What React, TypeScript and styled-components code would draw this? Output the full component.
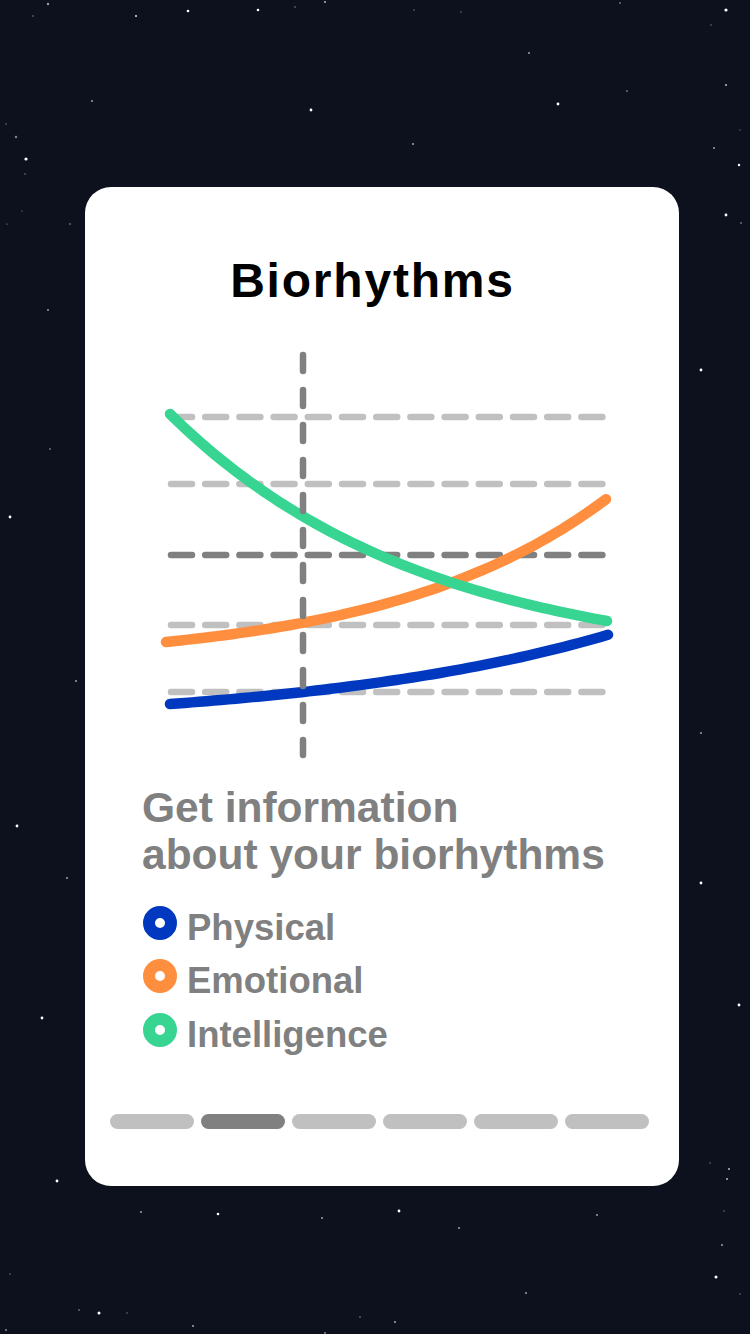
import React from "react";
import styled, { createGlobalStyle } from "styled-components";

const GlobalStyle = createGlobalStyle`
  html, body {
    margin: 0;
    padding: 0;
    background: #0c111d;
  }
  * { box-sizing: border-box; }
`;

const Page = styled.div`
  position: relative;
  width: 750px;
  min-height: 1334px;
  overflow: hidden;
  background: #0c111d;
  padding: 187px 0 0 85px;
  font-family: "Liberation Sans", Arial, sans-serif;
`;

const StarLayer = styled.svg`
  position: absolute;
  left: 0;
  top: 0;
  width: 750px;
  height: 1334px;
  pointer-events: none;
`;

const Card = styled.section`
  position: relative;
  z-index: 1;
  width: 594px;
  height: 999px;
  background: #ffffff;
  border-radius: 26px;
  padding: 66px 0 57px;
  display: flex;
  flex-direction: column;
`;

const Title = styled.h1`
  margin: 0;
  padding-right: 19px;
  text-align: center;
  font-size: 48px;
  line-height: 56px;
  font-weight: 700;
  letter-spacing: 1.8px;
  color: #000000;
`;

const Chart = styled.svg`
  display: block;
  margin: 36px 0 0 65px;
  width: 470px;
  height: 420px;
`;

const Subtitle = styled.p`
  margin: 19px 0 0 57px;
  font-size: 42.5px;
  line-height: 47px;
  font-weight: 700;
  color: #808080;
`;

const Legend = styled.ul`
  list-style: none;
  margin: 23.5px 0 0 58px;
  padding: 0;
  display: flex;
  flex-direction: column;
  gap: 1.5px;
`;

const LegendRow = styled.li`
  display: flex;
  align-items: flex-start;
  gap: 10px;
  height: 52px;
  font-size: 36.5px;
  line-height: 52px;
  font-weight: 700;
  color: #808080;
`;

const Dot = styled.span<{ $color: string }>`
  flex: none;
  width: 34px;
  height: 34px;
  margin-top: 4px;
  border-radius: 50%;
  border: 12px solid ${(p) => p.$color};
  background: #ffffff;
`;

const Pager = styled.div`
  margin: 53.5px 0 0 25px;
  display: flex;
  gap: 7px;
`;

const Pill = styled.span<{ $active?: boolean }>`
  width: 84px;
  height: 15px;
  border-radius: 8px;
  background: ${(p) => (p.$active ? "#808080" : "#c0c0c0")};
`;

const stars: [number, number, number, number][] = [
  [48, 4, 1.2, 0.6], [33, 16, 0.8, 0.5], [136, 16, 1, 0.9], [188, 11, 1.3, 1],
  [258, 10, 1.3, 1], [295, 7, 0.8, 0.5], [325, 2, 1, 0.7], [414, 10, 0.8, 0.4],
  [461, 12, 0.8, 0.4], [620, 3, 1, 0.4], [726, 10, 1.6, 1], [711, 25, 0.8, 0.4],
  [529, 53, 1, 0.6], [726, 85, 0.9, 0.8], [627, 91, 1, 0.4], [92, 101, 1, 0.6],
  [311, 110, 1.4, 1], [558, 104, 1.4, 1], [6, 124, 0.8, 0.4], [16, 137, 1.2, 0.5],
  [26, 159, 1.6, 1], [25, 174, 0.9, 0.3], [413, 144, 1.1, 0.6], [740, 130, 0.6, 0.6],
  [714, 148, 1, 0.6], [739, 165, 1.2, 1],
  [22, 211, 0.6, 0.6], [7, 224, 0.6, 0.6], [70, 224, 0.9, 0.4], [48, 310, 1, 0.6],
  [50, 449, 1, 0.4], [10, 517, 1.4, 1], [76, 681, 1, 0.6], [17, 826, 1.4, 1],
  [67, 878, 1, 0.6], [42, 1018, 1.4, 1], [57, 1181, 1.4, 1],
  [726, 215, 1.4, 1], [741, 223, 1, 0.4], [701, 370, 1.4, 1], [701, 733, 1, 0.6],
  [701, 883, 1.4, 1], [739, 1005, 1.4, 1], [710, 1163, 0.8, 0.4], [729, 1169, 1, 0.7],
  [727, 1179, 1, 0.7],
  [141, 1212, 1, 0.6], [218, 1214, 1.3, 1], [322, 1218, 1, 0.6], [399, 1211, 1.4, 1],
  [459, 1228, 1, 0.6], [597, 1215, 1, 0.6], [724, 1211, 0.8, 0.4], [722, 1245, 1, 0.6],
  [716, 1277, 1.5, 1], [526, 1293, 1, 0.6], [10, 1274, 0.8, 0.4], [79, 1310, 0.9, 0.4],
  [99, 1313, 1.5, 1], [127, 1313, 0.8, 0.4], [193, 1326, 1.1, 0.6], [395, 1322, 1.1, 0.6],
  [360, 1317, 1, 0.3], [740, 1294, 0.8, 0.4], [6, 1330, 1, 0.5], [325, 1333, 1, 0.5],
];

// chart origin in page coordinates
const OX = 150;
const OY = 345;

const curve = (x0: number, x1: number, f: (x: number) => number) => {
  const pts: string[] = [];
  const steps = 60;
  for (let i = 0; i <= steps; i++) {
    const x = x0 + ((x1 - x0) * i) / steps;
    pts.push(`${(x - OX).toFixed(2)},${(f(x) - OY).toFixed(2)}`);
  }
  return "M" + pts.join(" L");
};

const green = curve(170, 607, (x) => 667 - 253 * Math.exp(-0.0039 * (x - 170)));
const orange = curve(166, 606, (x) => 664.3 - 22.3 * Math.exp(0.00455 * (x - 166)));
const blue = curve(170, 608, (x) => 726.6 - 22.6 * Math.exp(0.0032 * (x - 170)));

const gridRows: { y: number; dark?: boolean }[] = [
  { y: 417 },
  { y: 484 },
  { y: 555, dark: true },
  { y: 625 },
  { y: 692 },
];

const legend = [
  { label: "Physical", color: "#0039c0" },
  { label: "Emotional", color: "#ff8f3f" },
  { label: "Intelligence", color: "#38d592" },
];

export default function App() {
  return (
    <>
      <GlobalStyle />
      <Page>
        <StarLayer viewBox="0 0 750 1334">
          {stars.map(([x, y, r, o], i) => (
            <circle key={i} cx={x} cy={y} r={r} fill="#ffffff" opacity={o} />
          ))}
        </StarLayer>
        <Card>
          <Title>Biorhythms</Title>
          <Chart viewBox="0 0 470 420">
            {gridRows.map((g) => (
              <line
                key={g.y}
                x1={171 - OX}
                x2={603 - OX}
                y1={g.y - OY}
                y2={g.y - OY}
                stroke={g.dark ? "#808080" : "#c0c0c0"}
                strokeWidth={6.5}
                strokeLinecap="round"
                strokeDasharray="21 13.2"
              />
            ))}
            <path d={blue} fill="none" stroke="#0039c0" strokeWidth={10.5} strokeLinecap="round" />
            <path d={orange} fill="none" stroke="#ff8f3f" strokeWidth={10.5} strokeLinecap="round" />
            <path d={green} fill="none" stroke="#38d592" strokeWidth={10.5} strokeLinecap="round" />
            <line
              x1={303 - OX}
              x2={303 - OX}
              y1={355 - OY}
              y2={755 - OY}
              stroke="#808080"
              strokeWidth={6.5}
              strokeLinecap="round"
              strokeDasharray="16 19"
            />
          </Chart>
          <Subtitle>
            Get information
            <br />
            about your biorhythms
          </Subtitle>
          <Legend>
            {legend.map((l) => (
              <LegendRow key={l.label}>
                <Dot $color={l.color} />
                {l.label}
              </LegendRow>
            ))}
          </Legend>
          <Pager>
            {[0, 1, 2, 3, 4, 5].map((i) => (
              <Pill key={i} $active={i === 1} />
            ))}
          </Pager>
        </Card>
      </Page>
    </>
  );
}
